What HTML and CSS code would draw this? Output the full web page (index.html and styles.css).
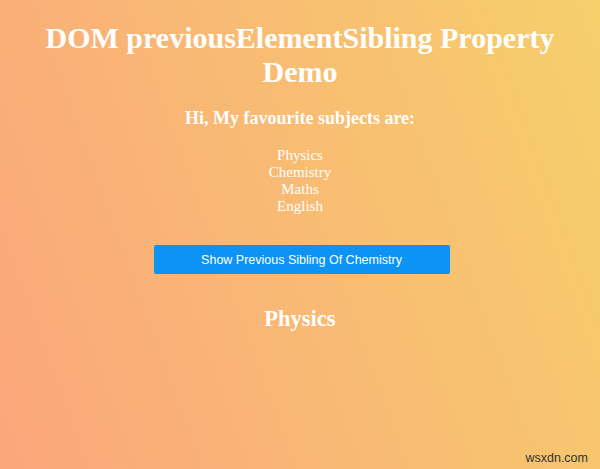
FILE: index.html
```html
<!DOCTYPE html>
<html>
<head>
<meta charset="utf-8">
<link rel="stylesheet" href="styles.css">
</head>
<body>
<main class="page">
  <h1 class="title">DOM previousElementSibling Property Demo</h1>
  <h3 class="subtitle">Hi, My favourite subjects are:</h3>
  <ul class="subjects">
    <li>Physics</li>
    <li>Chemistry</li>
    <li>Maths</li>
    <li>English</li>
  </ul>
  <button class="btn">Show Previous Sibling Of Chemistry</button>
  <h2 class="result">Physics</h2>
</main>
<div class="watermark">wsxdn.com</div>
</body>
</html>
```

FILE: styles.css
```css
html, body {
  margin: 0;
  padding: 0;
  height: 100%;
}
body {
  background: linear-gradient(70deg, #fba67c 0%, #f6cf6b 100%);
  font-family: "Liberation Serif", "Times New Roman", serif;
  color: #ffffff;
  position: relative;
  overflow: hidden;
}
.page {
  display: flex;
  flex-direction: column;
  align-items: center;
  text-align: center;
  padding: 0 8px;
}
.title {
  font-size: 30px;
  font-weight: bold;
  line-height: 34px;
  margin: 21px 0 0;
}
.subtitle {
  font-size: 18px;
  font-weight: bold;
  line-height: 21px;
  margin: 19px 0 0;
}
.subjects {
  list-style: none;
  padding: 0;
  margin: 18px 0 0;
  font-size: 15px;
  line-height: 17px;
}
.btn {
  margin-top: 30px;
  margin-left: 3px;
  width: 296px;
  height: 29px;
  background: #0c93f3;
  color: #ffffff;
  border: none;
  border-radius: 2px;
  font-family: "Liberation Sans", Arial, sans-serif;
  font-size: 12.5px;
}
.result {
  font-size: 22.5px;
  font-weight: bold;
  margin: 32px 0 0;
}
.watermark {
  position: absolute;
  right: 12px;
  bottom: 4px;
  font-family: "Liberation Sans", Arial, sans-serif;
  font-size: 12.5px;
  color: #333333;
}
```
